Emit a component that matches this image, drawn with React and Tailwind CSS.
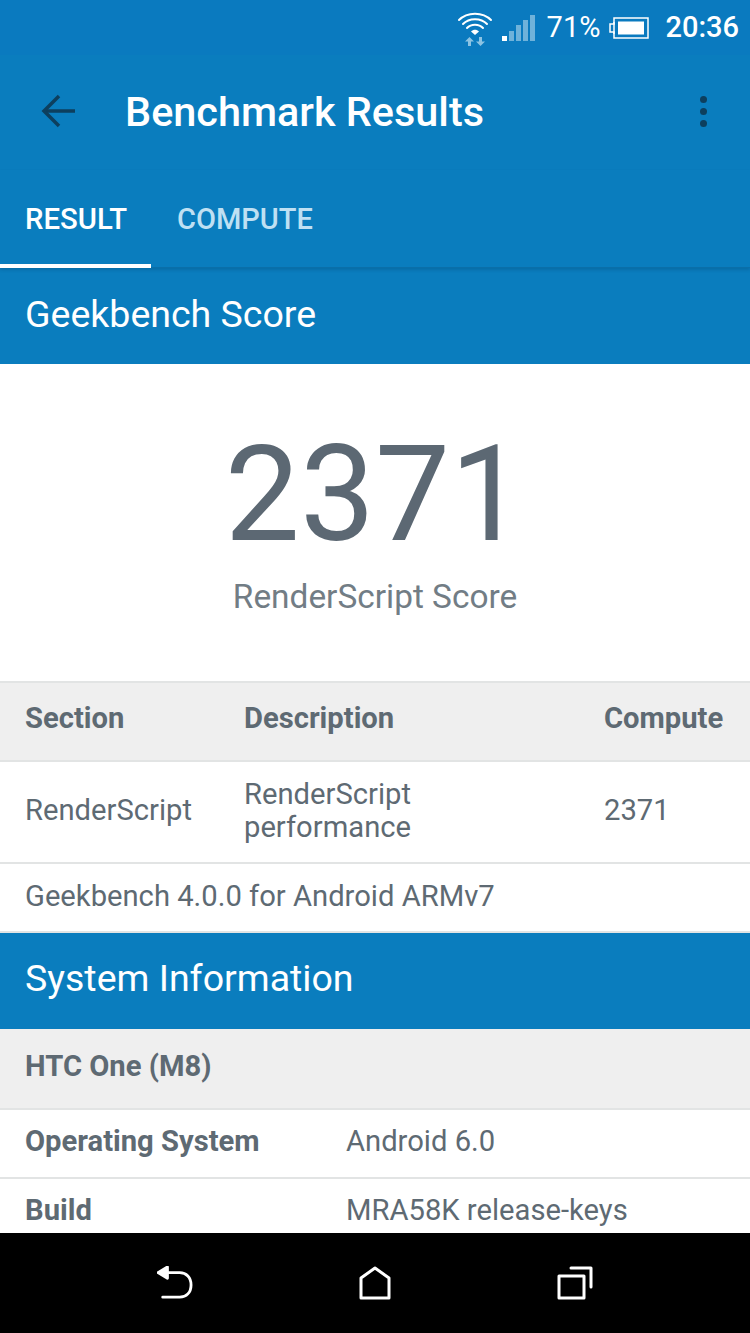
import React from "react";

const Divider = () => <div className="h-[2px] bg-[#e2e4e4] shrink-0" />;

const WifiIcon = () => (
  <svg width="36" height="36" viewBox="0 0 36 36" fill="none">
    <g stroke="#fff" strokeWidth="2" strokeLinecap="round">
      <path d="M2 10C10 1.5 26 1.5 34 10" />
      <path d="M6 14C12 7.5 24 7.5 30 14" />
      <path d="M10 18C14 13.5 22 13.5 26 18" />
    </g>
    <path d="M14 21.500C16.500 19 19.500 19 22 21.500L18 25Z" fill="#fff" />
    <path d="M12.500 27L8 31.500H11V36H14V31.500H17Z" fill="#8cc3e3" />
    <path d="M23.500 36L19 31.500H22V27H25V31.500H28Z" fill="#8cc3e3" />
  </svg>
);

const SignalIcon = () => (
  <div className="flex items-end gap-[2px] h-[26px]">
    <div className="w-[5px] h-[5px] bg-white" />
    <div className="w-[5px] h-[10px] bg-[#6fb2da]" />
    <div className="w-[5px] h-[16px] bg-[#6fb2da]" />
    <div className="w-[5px] h-[21px] bg-[#6fb2da]" />
    <div className="w-[5px] h-[26px] bg-[#6fb2da]" />
  </div>
);

const BatteryIcon = () => (
  <svg width="40" height="22" viewBox="0 0 40 22" fill="none">
    <path d="M5 5V7H1V15H5V17" stroke="#fff" strokeWidth="1.500" />
    <rect x="5" y="1" width="34" height="20" stroke="#fff" strokeWidth="1.500" />
    <rect x="9" y="4.500" width="26" height="13" fill="#fff" />
  </svg>
);

const BackArrow = () => (
  <svg width="36" height="36" viewBox="0 0 36 36" fill="none" stroke="#0d3f5e" strokeWidth="3.500">
    <path d="M34 18H4" />
    <path d="M18 3L3 18L18 33" />
  </svg>
);

const Overflow = () => (
  <div className="flex flex-col gap-[5px]">
    <div className="w-[7px] h-[7px] rounded-full bg-[#0d3f5e]" />
    <div className="w-[7px] h-[7px] rounded-full bg-[#0d3f5e]" />
    <div className="w-[7px] h-[7px] rounded-full bg-[#0d3f5e]" />
  </div>
);

const SectionBar = ({ title, className }) => (
  <div className={`h-[96px] flex items-center px-[25px] bg-[#0a7dbe] text-white text-[37.500px] shrink-0 ${className}`}>
    {title}
  </div>
);

const InfoRow = ({ label, value, className }) => (
  <div className={`flex px-[25px] text-[29.200px] shrink-0 ${className}`}>
    <div className="w-[321px] font-bold">{label}</div>
    <div>{value}</div>
  </div>
);

export default function App() {
  return (
    <div className="w-[750px] h-[1333px] flex flex-col overflow-hidden bg-white text-[#5e6a73] font-['Roboto',sans-serif]">
      {/* Status bar */}
      <div className="h-[55px] bg-[#0a7abf] flex items-center justify-end pr-[11px] text-white shrink-0">
        <WifiIcon />
        <div className="ml-[9px]"><SignalIcon /></div>
        <span className="ml-[12px] text-[29px]">71%</span>
        <div className="ml-[9px]"><BatteryIcon /></div>
        <span className="ml-[16px] text-[29px] font-medium">20:36</span>
      </div>

      {/* Toolbar */}
      <div className="h-[115px] bg-[#0a7dbe] flex items-center pb-[3px] shrink-0">
        <div className="ml-[41px]"><BackArrow /></div>
        <h1 className="ml-[48px] mt-[3px] text-white text-[41.400px] font-medium">Benchmark Results</h1>
        <div className="ml-auto mr-[43px]"><Overflow /></div>
      </div>

      {/* Tabs */}
      <div className="h-[98px] bg-[#0a7dbe] flex shrink-0 border-b border-[#0a6fa9] shadow-[0_2px_3px_rgba(0,60,100,0.25)] z-10">
        <div className="w-[151px] h-[98px] border-b-[4px] border-white flex items-center pt-[6px] pl-[25px] text-white text-[29.300px] font-medium">
          RESULT
        </div>
        <div className="flex items-center pl-[26px] h-[98px] pt-[2px] text-[#bfe0f3] text-[29px] font-medium">
          COMPUTE
        </div>
      </div>

      <SectionBar title="Geekbench Score" className="pb-[3px]" />

      {/* Score */}
      <div className="h-[317px] flex flex-col items-center shrink-0">
        <div className="mt-[58px] text-[133.600px] leading-[146px] text-[#5c6873]">2371</div>
        <div className="mt-[9px] text-[33.400px] leading-[40px] text-[#727d85]">RenderScript Score</div>
      </div>
      <Divider />

      {/* Compute table */}
      <div className="h-[77px] bg-[#efefef] flex items-center px-[25px] pb-[6px] text-[29.200px] font-bold shrink-0">
        <div className="w-[219px]">Section</div>
        <div className="w-[360px]">Description</div>
        <div>Compute</div>
      </div>
      <Divider />
      <div className="h-[100px] flex items-center px-[25px] pb-[3px] text-[29.200px] leading-[33px] shrink-0">
        <div className="w-[219px]">RenderScript</div>
        <div className="w-[360px]">RenderScript<br />performance</div>
        <div>2371</div>
      </div>
      <Divider />
      <div className="h-[67px] flex items-center px-[25px] pb-[2px] text-[29.200px] shrink-0">
        Geekbench 4.0.0 for Android ARMv7
      </div>
      <Divider />

      <SectionBar title="System Information" className="pb-[5px]" />

      {/* System information */}
      <div className="h-[79px] bg-[#efefef] flex items-center px-[25px] pb-[4px] text-[29.200px] font-bold shrink-0">
        HTC One (M8)
      </div>
      <Divider />
      <InfoRow label="Operating System" value="Android 6.0" className="h-[67px] items-center pb-[4px]" />
      <Divider />
      <InfoRow label="Build" value="MRA58K release-keys" className="h-[54px] items-start pt-[10px] overflow-hidden" />

      {/* Nav bar */}
      <div className="flex-1 min-h-0 bg-black flex items-center z-10 relative">
        <div className="w-[350px] flex justify-center">
          <svg width="36" height="34" viewBox="0 0 38 36" fill="none" stroke="#fff" strokeWidth="3" strokeLinecap="round" strokeLinejoin="round">
            <path d="M8 7H24C31 7 36 12 36 20C36 28 31 33 24 33H6" />
            <path d="M1 7L11 1V13Z" fill="#fff" />
          </svg>
        </div>
        <div className="w-[50px] flex justify-center">
          <svg width="32" height="34" viewBox="0 0 32 34" fill="none" stroke="#fff" strokeWidth="3" strokeLinejoin="round">
            <path d="M2 12L16 2L30 12V32H2Z" />
          </svg>
        </div>
        <div className="flex-1 flex justify-center">
          <svg width="36" height="34" viewBox="0 0 36 34" fill="none" stroke="#fff" strokeWidth="3" strokeLinejoin="round" strokeLinecap="round">
            <rect x="2" y="10" width="25" height="22" />
            <path d="M14 2H34V21" />
          </svg>
        </div>
      </div>
    </div>
  );
}
